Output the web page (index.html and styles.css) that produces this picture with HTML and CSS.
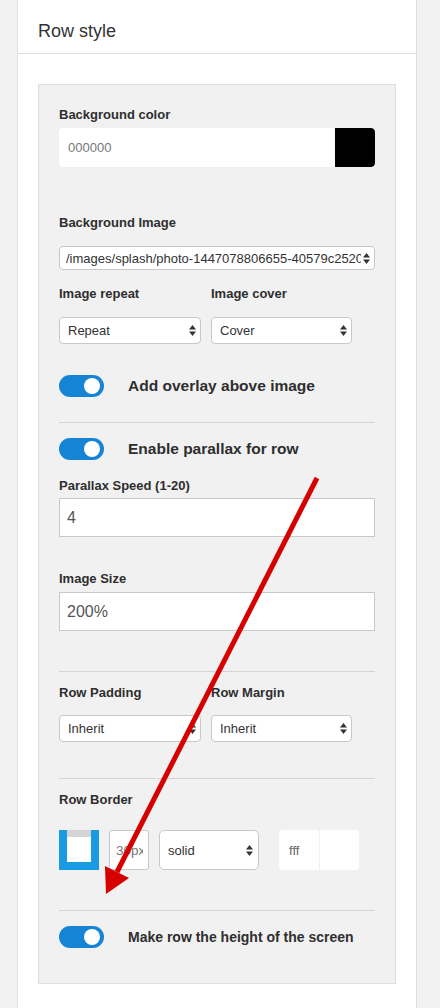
FILE: index.html
```html
<!DOCTYPE html>
<html>
<head>
<meta charset="utf-8">
<link rel="stylesheet" href="styles.css">
</head>
<body>
<div class="panel">
  <div class="panel-head">Row style</div>
  <div class="panel-body">
    <div class="well">
      <div class="lbl">Background color</div>
      <div class="colorpick mt5">
        <span class="cp-text">000000</span>
        <span class="cp-swatch black"></span>
      </div>

      <div class="lbl mt46">Background Image</div>
      <div class="sel sel-wide mt15">
        <span class="sel-text">/images/splash/photo-1447078806655-40579c2520b5?w=1600</span>
        <svg class="updown" width="7" height="11" viewBox="0 0 7 11"><polygon points="0,4.5 3.5,0 7,4.5" /><polygon points="0,6.5 3.5,11 7,6.5" /></svg>
      </div>

      <div class="cols mt14">
        <div class="col">
          <div class="lbl">Image repeat</div>
          <div class="sel sel-mid mt15">
            <span class="sel-text">Repeat</span>
            <svg class="updown" width="7" height="11" viewBox="0 0 7 11"><polygon points="0,4.5 3.5,0 7,4.5" /><polygon points="0,6.5 3.5,11 7,6.5" /></svg>
          </div>
        </div>
        <div class="col">
          <div class="lbl">Image cover</div>
          <div class="sel sel-mid mt15">
            <span class="sel-text">Cover</span>
            <svg class="updown" width="7" height="11" viewBox="0 0 7 11"><polygon points="0,4.5 3.5,0 7,4.5" /><polygon points="0,6.5 3.5,11 7,6.5" /></svg>
          </div>
        </div>
      </div>

      <div class="toggle-row mt31">
        <span class="toggle"><span class="knob"></span></span>
        <span class="toggle-label">Add overlay above image</span>
      </div>

      <div class="divider mt25"></div>

      <div class="toggle-row mt15">
        <span class="toggle"><span class="knob"></span></span>
        <span class="toggle-label">Enable parallax for row</span>
      </div>

      <div class="lbl mt16">Parallax Speed (1-20)</div>
      <div class="textinput mt4">4</div>

      <div class="lbl mt32">Image Size</div>
      <div class="textinput mt5">200%</div>

      <div class="divider mt40"></div>

      <div class="cols mt11">
        <div class="col">
          <div class="lbl">Row Padding</div>
          <div class="sel sel-mid mt14">
            <span class="sel-text">Inherit</span>
            <svg class="updown" width="7" height="11" viewBox="0 0 7 11"><polygon points="0,4.5 3.5,0 7,4.5" /><polygon points="0,6.5 3.5,11 7,6.5" /></svg>
          </div>
        </div>
        <div class="col">
          <div class="lbl">Row Margin</div>
          <div class="sel sel-mid mt14">
            <span class="sel-text">Inherit</span>
            <svg class="updown" width="7" height="11" viewBox="0 0 7 11"><polygon points="0,4.5 3.5,0 7,4.5" /><polygon points="0,6.5 3.5,11 7,6.5" /></svg>
          </div>
        </div>
      </div>

      <div class="divider mt36"></div>

      <div class="lbl mt11">Row Border</div>
      <div class="border-row mt22">
        <span class="border-icon"></span>
        <span class="px-input"><span class="px-text">30px</span></span>
        <div class="sel sel-solid">
          <span class="sel-text">solid</span>
          <svg class="updown" width="7" height="11" viewBox="0 0 7 11"><polygon points="0,4.5 3.5,0 7,4.5" /><polygon points="0,6.5 3.5,11 7,6.5" /></svg>
        </div>
        <div class="colorpick small">
          <span class="cp-text">fff</span>
          <span class="cp-swatch white"></span>
        </div>
      </div>

      <div class="divider mt40"></div>

      <div class="toggle-row mt15">
        <span class="toggle"><span class="knob"></span></span>
        <span class="toggle-label small">Make row the height of the screen</span>
      </div>
    </div>
  </div>
</div>

<svg class="arrow" width="440" height="1008" viewBox="0 0 440 1008">
  <line x1="317" y1="478" x2="117" y2="872" stroke="#d70000" stroke-width="5" />
  <polygon points="106,894 129,878 105,866" fill="#d70000" />
</svg>
</body>
</html>
```

FILE: styles.css
```css
* { box-sizing: border-box; }

html, body {
  margin: 0;
  padding: 0;
}

body {
  background: #f2f2f2;
  font-family: "Liberation Sans", Arial, Helvetica, sans-serif;
  color: #333;
  position: relative;
  width: 440px;
  height: 1008px;
  overflow: hidden;
}

.panel {
  margin-left: 17px;
  width: 400px;
  min-height: 1008px;
  background: #fff;
  border-left: 1px solid #ddd;
  border-right: 1px solid #ddd;
}

.panel-head {
  padding: 20px 20px 11px;
  font-size: 18px;
  line-height: 22px;
  color: #333;
  border-bottom: 1px solid #ddd;
}

.panel-body {
  padding: 30px 20px 0;
}

.well {
  background: #f1f1f1;
  border: 1px solid #ddd;
  padding: 20px 20px 35px;
}

.lbl {
  font-size: 13px;
  font-weight: bold;
  line-height: 18px;
  padding-top: 1px;
  margin-bottom: -1px;
  color: #2e2e2e;
}

.mt4 { margin-top: 4px; }
.mt5 { margin-top: 5px; }
.mt11 { margin-top: 11px; }
.mt14 { margin-top: 14px; }
.mt15 { margin-top: 15px; }
.mt16 { margin-top: 16px; }
.mt22 { margin-top: 22px; }
.mt25 { margin-top: 25px; }
.mt31 { margin-top: 31px; }
.mt32 { margin-top: 32px; }
.mt36 { margin-top: 36px; }
.mt40 { margin-top: 40px; }
.mt46 { margin-top: 46px; }

.colorpick {
  display: flex;
  height: 39px;
  background: #fff;
  border-radius: 4px;
  overflow: hidden;
}

.cp-text {
  flex: 1;
  display: flex;
  align-items: center;
  padding-left: 9px;
  font-size: 13px;
  color: #777;
}

.cp-swatch {
  width: 40px;
  flex: none;
  border-radius: 0 4px 4px 0;
}

.cp-swatch.black { background: #000; }
.cp-swatch.white { background: #fff; border-left: 1px solid #f0f0f0; }

.colorpick.small {
  width: 80px;
  height: 40px;
}

.colorpick.small .cp-text {
  padding-left: 10px;
  color: #666;
}

.sel {
  display: flex;
  align-items: center;
  background: #fff;
  border: 1px solid #c8c8c8;
  border-radius: 4px;
  padding: 0 4px 0 8px;
  font-size: 13px;
  color: #333;
}

.sel-text {
  flex: 1;
  min-width: 0;
  white-space: nowrap;
  overflow: hidden;
}

.updown {
  flex: none;
  margin-left: 2px;
  fill: #333;
}

.sel-wide {
  height: 24px;
  padding-left: 6px;
}

.sel-mid {
  height: 27px;
}

.sel-solid {
  width: 100px;
  height: 40px;
  border-radius: 5px;
  padding-left: 8px;
  padding-right: 5px;
}

.cols {
  display: grid;
  grid-template-columns: 142px 141px;
  column-gap: 10px;
}

.toggle-row {
  display: flex;
  align-items: center;
  height: 22px;
}

.toggle {
  display: flex;
  align-items: center;
  justify-content: flex-end;
  width: 45px;
  height: 22px;
  border-radius: 11px;
  background: #1684d4;
  padding-right: 4px;
  flex: none;
}

.knob {
  width: 16px;
  height: 16px;
  border-radius: 50%;
  background: #fff;
}

.toggle-label {
  margin-left: 24px;
  font-size: 15.5px;
  font-weight: bold;
  color: #2e2e2e;
}

.toggle-label.small {
  font-size: 14px;
}

.divider {
  height: 1px;
  background: #d4d4d4;
}

.textinput {
  height: 39px;
  background: #fff;
  border: 1px solid #c8c8c8;
  display: flex;
  align-items: center;
  padding-left: 7px;
  font-size: 16px;
  color: #555;
}

.border-row {
  display: flex;
  align-items: center;
  height: 40px;
}

.border-icon {
  width: 40px;
  height: 40px;
  flex: none;
  border: 8px solid #189be3;
  border-top: 0;
  background: linear-gradient(#d4d4d4 0 7px, #fff 7px);
}

.px-input {
  width: 40px;
  height: 40px;
  margin-left: 10px;
  flex: none;
  background: #fff;
  border: 1px solid #c8c8c8;
  border-radius: 3px;
  display: flex;
  align-items: center;
  padding: 0 5px 0 6px;
  font-size: 13.5px;
  color: #777;
}

.px-text {
  flex: 1;
  min-width: 0;
  overflow: hidden;
  white-space: nowrap;
}

.sel-solid {
  margin-left: 10px;
}

.border-row .colorpick.small {
  margin-left: 20px;
}

.arrow {
  position: absolute;
  left: 0;
  top: 0;
  pointer-events: none;
}
```
